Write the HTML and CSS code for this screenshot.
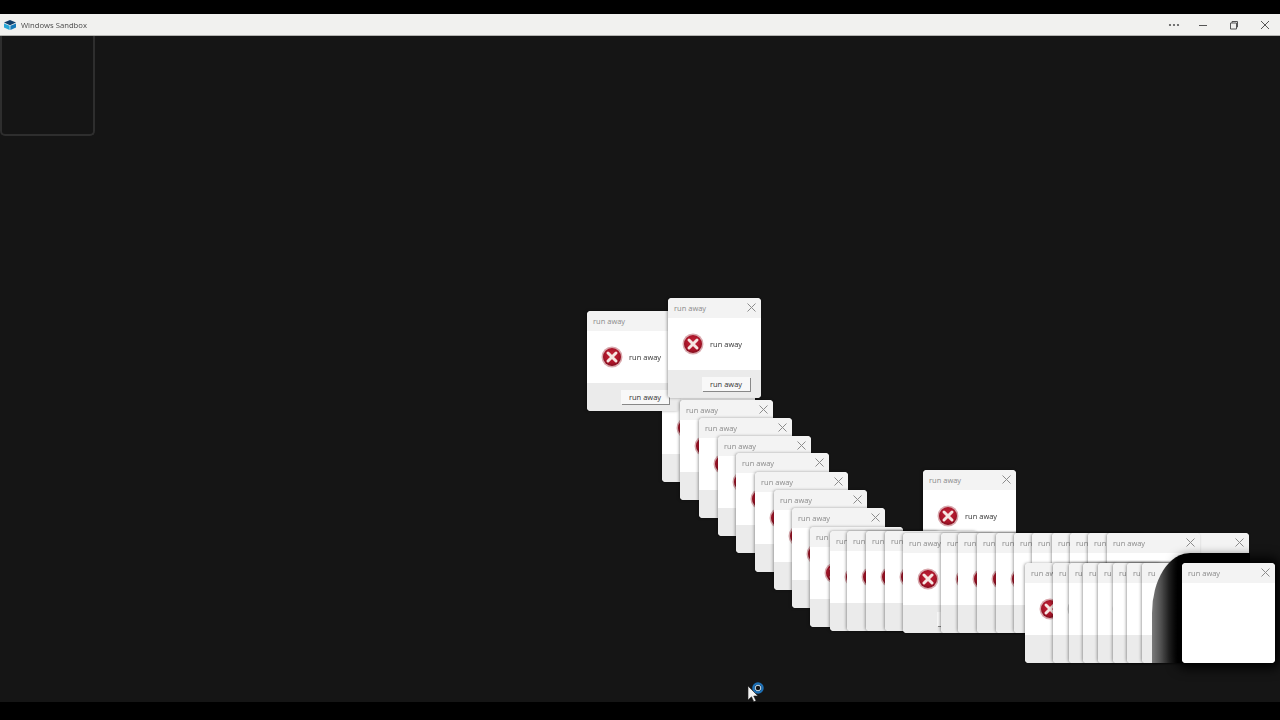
FILE: index.html
```html
<!DOCTYPE html>
<html>
<head>
    <title>Windows Sandbox</title>
    <link rel="stylesheet" href="styles.css">
</head>
<body>
    <svg class="defs" width="0" height="0">
        <defs>
            <radialGradient id="red-fill" cx="50%" cy="42%" r="60%">
                <stop offset="0%" stop-color="#c8283c"/>
                <stop offset="70%" stop-color="#a81428"/>
                <stop offset="100%" stop-color="#7c0c1c"/>
            </radialGradient>
            <symbol id="err" viewBox="0 0 22 22">
                <circle cx="11" cy="11" r="10.5" fill="#d9a9ae"/>
                <circle cx="11" cy="11" r="9" fill="url(#red-fill)"/>
                <path d="M7 7l8 8M15 7l-8 8" stroke="#f6e6e2" stroke-width="3" stroke-linecap="round"/>
            </symbol>
            <symbol id="close" viewBox="0 0 9 9">
                <path d="M.5.5l8 8M8.500.5l-8 8" stroke="#8c8c8c" stroke-width="1" fill="none"/>
            </symbol>
        </defs>
    </svg>

    <div class="letterbox-top"></div>

    <header class="titlebar">
        <svg class="app-logo" viewBox="0 0 12 10">
            <path d="M6 0l6 2.600-6 2.600-6-2.600z" fill="#123f6b"/>
            <path d="M0 3.400l5.600 2.400V10L0 7.400z" fill="#25a7d8"/>
            <path d="M12 3.400L6.400 5.800V10L12 7.400z" fill="#1679b8"/>
        </svg>
        <span class="app-name">Windows Sandbox</span>
        <div class="controls">
            <svg class="ctl" viewBox="0 0 12 12"><circle cx="2" cy="6" r="1.100"/><circle cx="6" cy="6" r="1.100"/><circle cx="10" cy="6" r="1.100"/></svg>
            <svg class="ctl" viewBox="0 0 12 12"><path d="M2 6.500h8" class="ln"/></svg>
            <svg class="ctl" viewBox="0 0 12 12"><path d="M2.500 4h6v6h-6zM4 4V2.500h5.500V8H8.500" class="ln"/></svg>
            <svg class="ctl" viewBox="0 0 12 12"><path d="M2 2l8 8M10 2l-8 8" class="ln"/></svg>
        </div>
    </header>

    <main class="desktop">
        <div class="snap-panel"></div>

        <div class="win w-a1"><div class="win-title">run away<svg class="x"><use href="#close"/></svg></div><div class="win-body"><svg class="err"><use href="#err"/></svg><span class="msg">run away</span></div><div class="win-foot"></div></div>
        <div class="win w-a2"><div class="win-title"></div><div class="win-body"><svg class="err"><use href="#err"/></svg></div><div class="win-foot"></div></div>
        <div class="win w-a3"><div class="win-title">run away</div><div class="win-body"><svg class="err"><use href="#err"/></svg><span class="msg">run away</span></div><div class="win-foot"><div class="btn">run away</div></div></div>
        <div class="win w-a4"><div class="win-title">run away<svg class="x"><use href="#close"/></svg></div><div class="win-body"><svg class="err"><use href="#err"/></svg><span class="msg">run away</span></div><div class="win-foot"><div class="btn">run away</div></div></div>

        <!-- the trail going down to the right -->
        <div class="win w-b1"><div class="win-title">run away<svg class="x"><use href="#close"/></svg></div><div class="win-body"><svg class="err"><use href="#err"/></svg></div><div class="win-foot"></div></div>
        <div class="win w-b2"><div class="win-title">run away<svg class="x"><use href="#close"/></svg></div><div class="win-body"><svg class="err"><use href="#err"/></svg></div><div class="win-foot"></div></div>
        <div class="win w-b3"><div class="win-title">run away<svg class="x"><use href="#close"/></svg></div><div class="win-body"><svg class="err"><use href="#err"/></svg></div><div class="win-foot"></div></div>
        <div class="win w-b4"><div class="win-title">run away<svg class="x"><use href="#close"/></svg></div><div class="win-body"><svg class="err"><use href="#err"/></svg></div><div class="win-foot"></div></div>
        <div class="win w-b5"><div class="win-title">run away<svg class="x"><use href="#close"/></svg></div><div class="win-body"><svg class="err"><use href="#err"/></svg></div><div class="win-foot"></div></div>
        <div class="win w-b6"><div class="win-title">run away<svg class="x"><use href="#close"/></svg></div><div class="win-body"><svg class="err"><use href="#err"/></svg></div><div class="win-foot"></div></div>
        <div class="win w-b7"><div class="win-title">run away<svg class="x"><use href="#close"/></svg></div><div class="win-body"><svg class="err"><use href="#err"/></svg></div><div class="win-foot"></div></div>

        <!-- upper row, only the start of each title shows -->
        <div class="win w-c1"><div class="win-title">run</div><div class="win-body"><svg class="err"><use href="#err"/></svg></div><div class="win-foot"></div></div>
        <div class="win w-c2"><div class="win-title">run</div><div class="win-body"><svg class="err"><use href="#err"/></svg></div><div class="win-foot"></div></div>
        <div class="win w-c3"><div class="win-title">run</div><div class="win-body"><svg class="err"><use href="#err"/></svg></div><div class="win-foot"></div></div>
        <div class="win w-c4"><div class="win-title">run</div><div class="win-body"><svg class="err"><use href="#err"/></svg></div><div class="win-foot"></div></div>
        <div class="win w-c5"><div class="win-title">run</div><div class="win-body"><svg class="err"><use href="#err"/></svg></div><div class="win-foot"></div></div>
        <div class="win w-c6"><div class="win-title">run away</div><div class="win-body"><svg class="err"><use href="#err"/></svg></div><div class="win-foot"><div class="btn"></div></div></div>
        <div class="win w-c7"><div class="win-title">run</div><div class="win-body"><svg class="err"><use href="#err"/></svg></div><div class="win-foot"></div></div>
        <div class="win w-c8"><div class="win-title">run</div><div class="win-body"><svg class="err"><use href="#err"/></svg></div><div class="win-foot"></div></div>
        <div class="win w-c9"><div class="win-title">run</div><div class="win-body"><svg class="err"><use href="#err"/></svg></div><div class="win-foot"></div></div>
        <div class="win w-c10"><div class="win-title">run</div><div class="win-body"><svg class="err"><use href="#err"/></svg></div><div class="win-foot"></div></div>
        <div class="win w-c11"><div class="win-title">run</div><div class="win-body"><svg class="err"><use href="#err"/></svg></div><div class="win-foot"></div></div>
        <div class="win w-c12"><div class="win-title">run</div><div class="win-body"><svg class="err"><use href="#err"/></svg></div><div class="win-foot"></div></div>
        <div class="win w-c13"><div class="win-title">run</div><div class="win-body"><svg class="err"><use href="#err"/></svg></div><div class="win-foot"></div></div>
        <div class="win w-c14"><div class="win-title">run</div><div class="win-body"><svg class="err"><use href="#err"/></svg></div><div class="win-foot"></div></div>
        <div class="win w-c15"><div class="win-title">run</div><div class="win-body"><svg class="err"><use href="#err"/></svg></div><div class="win-foot"></div></div>
        <div class="win w-c16"><div class="win-title"><svg class="x"><use href="#close"/></svg></div><div class="win-body"></div><div class="win-foot"></div></div>
        <div class="win w-c17"><div class="win-title">run away<svg class="x"><use href="#close"/></svg></div><div class="win-body"><svg class="err"><use href="#err"/></svg></div><div class="win-foot"></div></div>

        <!-- lower row -->
        <div class="win w-d1"><div class="win-title">run aw</div><div class="win-body"><svg class="err"><use href="#err"/></svg></div><div class="win-foot"></div></div>
        <div class="win faded w-d2"><div class="win-title">ru</div><div class="win-body"><svg class="err"><use href="#err"/></svg></div><div class="win-foot"></div></div>
        <div class="win faded w-d3"><div class="win-title">ru</div><div class="win-body"></div><div class="win-foot"></div></div>
        <div class="win faded w-d4"><div class="win-title">ru</div><div class="win-body"></div><div class="win-foot"></div></div>
        <div class="win faded w-d5"><div class="win-title">ru</div><div class="win-body"><svg class="err"><use href="#err"/></svg></div><div class="win-foot"></div></div>
        <div class="win faded w-d6"><div class="win-title">ru</div><div class="win-body"></div><div class="win-foot"></div></div>
        <div class="win faded w-d7"><div class="win-title">ru</div><div class="win-body"></div><div class="win-foot"></div></div>
        <div class="win faded w-d8"><div class="win-title">ru</div><div class="win-body"></div><div class="win-foot"></div></div>

        <div class="swoosh"></div>

        <div class="win blank w-front"><div class="win-title">run away<svg class="x"><use href="#close"/></svg></div><div class="win-body"></div></div>

        <svg class="busy" viewBox="0 0 24 24">
            <circle cx="13" cy="8" r="4.500" fill="none" stroke="#1d6fb4" stroke-width="2.500"/>
            <circle cx="13" cy="8" r="2.800" fill="none" stroke="#cfe4f4" stroke-width="1"/>
            <path d="M3 6v14l3.500-3.200 2.300 5 2.200-1-2.300-4.800H13z" fill="#f4f4f4" stroke="#222" stroke-width=".6"/>
        </svg>
    </main>

    <div class="letterbox-bottom"></div>
</body>
</html>
```

FILE: styles.css
```css
html, body { margin: 0; height: 100%; }
body { display: flex; flex-direction: column; height: 720px; overflow: hidden; background: #000; font-family: "Open Sans", "Liberation Sans", sans-serif; }
.defs { position: absolute; }

.letterbox-top { height: 14px; background: #000; }
.letterbox-bottom { height: 18px; background: #000; }

.titlebar { display: flex; align-items: center; height: 21px; padding-left: 4px; background: #f1f1ef; border-bottom: 1px solid #b5b5b2; filter: blur(.5px); }
.app-logo { width: 12px; height: 10px; margin-right: 5px; }
.app-name { font-size: 7.700px; color: #4a4a4a; }
.controls { display: flex; gap: 19px; margin-left: auto; padding-right: 9px; }
.ctl { width: 12px; height: 12px; fill: #555; }
.ctl:first-child { margin-right: -2px; }
.ln { fill: none; stroke: #555; stroke-width: 1; }

.desktop { position: relative; flex: 1; background: #151515; overflow: hidden; }
.snap-panel { width: 91px; height: 98px; border: 2px solid #2e2e2e; border-top: none; border-radius: 0 0 5px 5px; filter: blur(.4px); }

.win { position: absolute; display: flex; flex-direction: column; width: 93px; height: 100px; border-radius: 4px; overflow: hidden; background: #fff; color: #8a8a8a; font-size: 7.500px; box-shadow: -1px 0 3px rgba(0, 0, 0, .35); filter: blur(.5px); }
.win-title { position: relative; height: 20px; padding-left: 6px; line-height: 20px; background: #f3f3f3; white-space: nowrap; }
.x { position: absolute; top: 5px; right: 5px; width: 9px; height: 9px; }
.win-body { position: relative; height: 52px; background: #fff; }
.err { position: absolute; left: 14px; top: 15px; width: 22px; height: 22px; }
.msg { position: absolute; left: 42px; top: 21px; color: #333; }
.win-foot { position: relative; flex: 1; background: #ebebeb; }
.btn { position: absolute; left: 34px; top: 7px; width: 48px; height: 14px; line-height: 14px; text-align: center; color: #333; background: #f8f8f8; box-shadow: 1px 1px 0 #888; }

.faded .err { filter: grayscale(1); opacity: .55; }
.blank .win-body { flex: 1; }

/* first group, y is minus the 36px above the desktop */
.w-a1 { left: 923px; top: 434px; }
.w-a2 { left: 662px; top: 346px; }
.w-a3 { left: 587px; top: 275px; }
.w-a4 { left: 668px; top: 262px; }

.w-b1 { left: 680px; top: 364px; }
.w-b2 { left: 699px; top: 382px; }
.w-b3 { left: 718px; top: 400px; }
.w-b4 { left: 736px; top: 417px; }
.w-b5 { left: 755px; top: 436px; }
.w-b6 { left: 774px; top: 454px; }
.w-b7 { left: 792px; top: 472px; }

.w-c1 { left: 810px; top: 491px; }
.w-c2 { left: 830px; top: 495px; }
.w-c3 { left: 847px; top: 495px; }
.w-c4 { left: 866px; top: 495px; }
.w-c5 { left: 885px; top: 495px; }
.w-c6 { left: 903px; top: 497px; }
.w-c7 { left: 941px; top: 497px; }
.w-c8 { left: 958px; top: 497px; }
.w-c9 { left: 977px; top: 497px; }
.w-c10 { left: 996px; top: 497px; }
.w-c11 { left: 1014px; top: 497px; }
.w-c12 { left: 1032px; top: 497px; }
.w-c13 { left: 1052px; top: 497px; }
.w-c14 { left: 1070px; top: 497px; }
.w-c15 { left: 1088px; top: 497px; }
.w-c16 { left: 1156px; top: 497px; }
.w-c17 { left: 1107px; top: 497px; }

.w-d1 { left: 1025px; top: 527px; }
.w-d2 { left: 1053px; top: 527px; }
.w-d3 { left: 1069px; top: 527px; }
.w-d4 { left: 1083px; top: 527px; }
.w-d5 { left: 1098px; top: 527px; }
.w-d6 { left: 1113px; top: 527px; }
.w-d7 { left: 1127px; top: 527px; }
.w-d8 { left: 1142px; top: 527px; }

/* trail the moving window leaves behind it */
.swoosh { position: absolute; left: 1152px; top: 517px; width: 98px; height: 110px; border-radius: 38px 0 0 0 / 60px 0 0 0; background: linear-gradient(90deg, #7a7a7a 0, #555 8px, #222 17px, #000 26px); filter: blur(.6px); }
.w-front { left: 1182px; top: 527px; box-shadow: 0 0 12px 5px #000; }

.busy { position: absolute; left: 745px; top: 644px; width: 24px; height: 24px; }
```
